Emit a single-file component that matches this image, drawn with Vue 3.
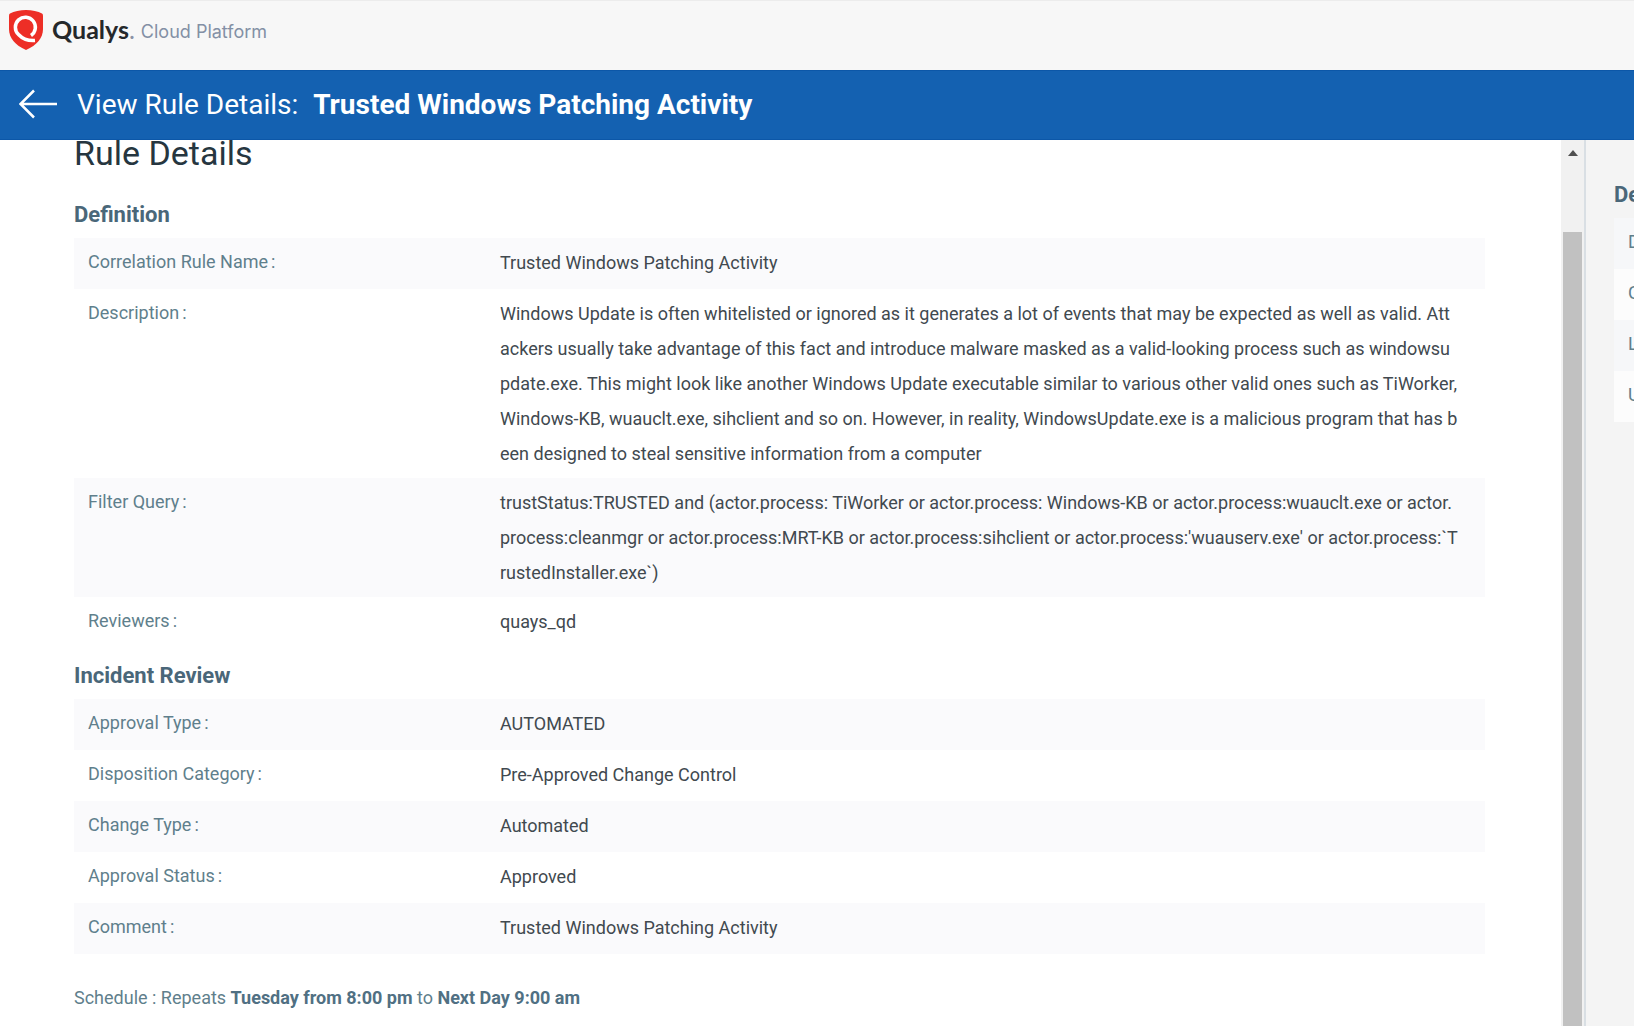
<script setup>
const definition = [
  { label: 'Correlation Rule Name', lines: ['Trusted Windows Patching Activity'] },
  {
    label: 'Description',
    lines: [
      'Windows Update is often whitelisted or ignored as it generates a lot of events that may be expected as well as valid. Att',
      'ackers usually take advantage of this fact and introduce malware masked as a valid-looking process such as windowsu',
      'pdate.exe. This might look like another Windows Update executable similar to various other valid ones such as TiWorker,',
      'Windows-KB, wuauclt.exe, sihclient and so on. However, in reality, WindowsUpdate.exe is a malicious program that has b',
      'een designed to steal sensitive information from a computer',
    ],
  },
  {
    label: 'Filter Query',
    lines: [
      'trustStatus:TRUSTED and (actor.process: TiWorker or actor.process: Windows-KB or actor.process:wuauclt.exe or actor.',
      "process:cleanmgr or actor.process:MRT-KB or actor.process:sihclient or actor.process:'wuauserv.exe' or actor.process:`T",
      'rustedInstaller.exe`)',
    ],
  },
  { label: 'Reviewers', lines: ['quays_qd'] },
]

const review = [
  { label: 'Approval Type', lines: ['AUTOMATED'] },
  { label: 'Disposition Category', lines: ['Pre-Approved Change Control'] },
  { label: 'Change Type', lines: ['Automated'] },
  { label: 'Approval Status', lines: ['Approved'] },
  { label: 'Comment', lines: ['Trusted Windows Patching Activity'] },
]

const sections = [
  { title: 'Definition', rows: definition },
  { title: 'Incident Review', rows: review },
]

const sideRows = ['D', 'C', 'L', 'U']
</script>

<template>
  <div class="page">
    <header class="brand">
      <svg class="shield" width="34" height="40" viewBox="0 0 34 40" aria-hidden="true">
        <path d="M17 0C23 0 29 1.300 33 3.400Q34 4 34 5.500V19C34 28 28 35 17 40C6 35 0 28 0 19V5.500Q0 4 1 3.400C5 1.300 11 0 17 0Z" fill="#ed2e26" />
        <path d="M22 25.500A10 10 0 1 0 9.500 24.500C13.500 28.800 19 31 26 30.500" fill="none" stroke="#fff" stroke-width="3.500" />
      </svg>
      <span class="name">Qualys<span class="dot">.</span></span>
      <span class="product">Cloud Platform</span>
    </header>

    <div class="titlebar">
      <button class="back" type="button" aria-label="Back">
        <svg width="38" height="30" viewBox="0 0 38 30" aria-hidden="true">
          <path d="M38 15H2M15 1.500L1.500 15L15 28.500" fill="none" stroke="#fff" stroke-width="2.500" />
        </svg>
      </button>
      <p class="title">View Rule Details: <strong>Trusted Windows Patching Activity</strong></p>
    </div>

    <div class="body">
      <main class="content">
        <h1>Rule Details</h1>
        <section v-for="s in sections" :key="s.title">
          <h2>{{ s.title }}</h2>
          <table>
            <tbody>
              <tr v-for="r in s.rows" :key="r.label">
                <th scope="row">{{ r.label }}<span class="colon">:</span></th>
                <td>{{ r.lines.join('\n') }}</td>
              </tr>
            </tbody>
          </table>
        </section>
        <p class="schedule">Schedule : Repeats <b>Tuesday from 8:00 pm</b> to <b>Next Day 9:00 am</b></p>
      </main>

      <div class="track">
        <span class="up"></span>
        <span class="thumb"></span>
      </div>

      <aside class="side">
        <h2>De</h2>
        <ul>
          <li v-for="r in sideRows" :key="r">{{ r }}</li>
        </ul>
      </aside>
    </div>
  </div>
</template>

<style>
body {
  margin: 0;
}
</style>

<style scoped>
.page {
  display: flex;
  flex-direction: column;
  height: 100vh;
  overflow: hidden;
  background: #fff;
  color: #41494f;
  font-family: Roboto, sans-serif;
  font-size: 18px;
  line-height: 35px;
}

.brand {
  box-sizing: border-box;
  display: flex;
  flex: none;
  align-items: center;
  height: 70px;
  padding: 0 9px 12px;
  border-top: 1px solid #ececec;
  background: #f7f7f7;
}

.name {
  margin-left: 9px;
  color: #25282b;
  font-family: Lato, sans-serif;
  font-size: 25px;
  font-weight: 700;
}

.dot {
  color: #8a93a5;
  font-weight: 400;
}

.product {
  margin-left: 6px;
  padding-top: 3px;
  color: #8390a5;
  font-family: Inter, sans-serif;
  font-size: 18px;
}

.titlebar {
  box-sizing: border-box;
  display: flex;
  flex: none;
  align-items: center;
  height: 70px;
  padding: 0 19px 2px;
  border-top: 1px solid #0c57a8;
  border-bottom: 1px solid #0c57a8;
  background: #1461b1;
  color: #fff;
}

.back {
  display: flex;
  padding: 0;
  border: 0;
  background: none;
}

.title {
  margin: 0 0 0 20px;
  font-size: 28px;
}

.title strong {
  margin-left: 8px;
  font-weight: 700;
}

.body {
  display: flex;
  flex: 1;
  min-height: 0;
}

.content {
  flex: 1;
  padding: 0 76px 0 74px;
  overflow: hidden;
}

h1 {
  margin: 0 0 34px;
  color: #263640;
  font-size: 34px;
  font-weight: 400;
  line-height: 26px;
}

h2 {
  margin: 0 0 8px;
  color: #4a6779;
  font-size: 22px;
  font-weight: 700;
  line-height: 30px;
}

section + section {
  margin-top: 13px;
}

table {
  width: 100%;
  border-collapse: collapse;
  table-layout: fixed;
}

tr {
  height: 51px;
}

tr:nth-child(odd) {
  background: #fafafc;
}

th,
td {
  padding: 7px 0;
  text-align: left;
  vertical-align: top;
}

th {
  width: 412px;
  padding-left: 14px;
  color: #5f7f8c;
  font-weight: 400;
  line-height: 33px;
}

.colon {
  margin-left: 3px;
}

td {
  white-space: pre;
}

.schedule {
  margin: 26px 0 0;
  color: #5f7f8c;
}

.schedule b {
  color: #507083;
  font-weight: 700;
}

.track {
  display: flex;
  flex: none;
  flex-direction: column;
  align-items: center;
  width: 23px;
  padding-top: 10px;
  background: #f1f1f1;
}

.up {
  border: 5px solid transparent;
  border-top: 0;
  border-bottom: 6px solid #505050;
}

.thumb {
  flex: 1;
  width: 19px;
  margin-top: 76px;
  background: #c1c1c1;
}

.side {
  flex: none;
  width: 20px;
  padding: 40px 0 0 28px;
  overflow: hidden;
  border-left: 2px solid #d9dfe4;
  background: #f4f4f4;
}

.side ul {
  margin: 0;
  padding: 0;
  list-style: none;
}

.side li {
  height: 37px;
  padding: 7px 0 7px 14px;
  background: #fcfcfc;
  color: #5f7f8c;
  line-height: 33px;
}

.side li:nth-child(odd) {
  background: #f6f7f9;
}
</style>
